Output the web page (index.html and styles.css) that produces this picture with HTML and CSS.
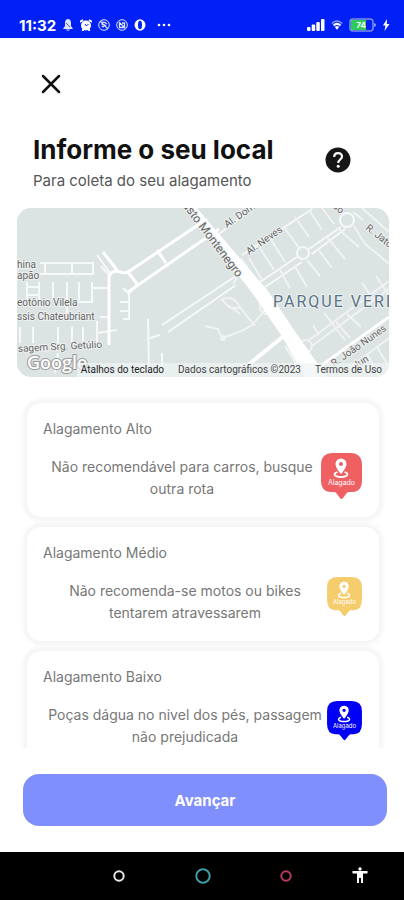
FILE: index.html
```html
<!DOCTYPE html>
<html lang="pt-BR">
<head>
    <meta charset="UTF-8">
    <meta name="viewport" content="width=device-width, initial-scale=1.0">
    <title>Informe o seu local</title>
    <link rel="stylesheet" href="styles.css">
</head>
<body>
    <!-- shared marker shape -->
    <svg class="defs" aria-hidden="true">
        <symbol id="marker" viewBox="0 0 41 47">
            <path fill="currentColor" d="M12 0h17q12 0 12 12v15q0 12-10 12h-3q-2 0-3 2l-3 4q-1.500 2-3 0l-3-4q-1-2-3-2h-3q-10 0-10-12V12Q0 0 12 0z"/>
            <path fill="#fff" fill-rule="evenodd" d="M20 5.500a5.500 5.500 0 0 0-5.500 5.500c0 4 5.500 10 5.500 10s5.500-6 5.500-10A5.500 5.500 0 0 0 20 5.500zm0 3.500a2 2 0 1 1 0 4 2 2 0 0 1 0-4z"/>
            <path fill="none" stroke="#fff" stroke-width="1.800" d="M16.500 19c-5 1.500-3.500 5 3.500 5s8.500-3.500 3.500-5"/>
            <text class="marker-text" x="20.500" y="32" text-anchor="middle" fill="#fff">Alagado</text>
        </symbol>
    </svg>

    <div class="status-bar">
        <span class="time">11:32</span>
        <svg class="status-icon" viewBox="0 0 12 12"><path fill="#dde3ff" d="M6 0c2 0 3 2 3 4v3l2 3H1l2-3V4c0-2 1-4 3-4zM4 10.500h4Q6 13 4 10.500z"/><path stroke="#0020f5" stroke-width=".7" d="M4 4l4 4"/></svg>
        <svg class="status-icon" viewBox="0 0 12 12"><circle cx="6" cy="6.500" r="5" fill="#fff"/><path stroke="#fff" stroke-width="2" d="M0 3l3-2M12 3L9 1M2.500 12l1-2M9.500 12l-1-2"/><path fill="none" stroke="#0020f5" d="M5 5l1.500 2L8.500 5"/></svg>
        <svg class="status-icon" viewBox="0 0 12 12" fill="none" stroke="#dde3ff"><circle cx="6" cy="6" r="5.300"/><path stroke-width="1.300" d="M3 4q3-2 6 1M3.500 6q2-1.500 4.500 1M4 8q1-1 2 0M2 2l8 8"/></svg>
        <svg class="status-icon" viewBox="0 0 12 12" fill="none" stroke="#dde3ff"><circle cx="6" cy="6" r="5.300"/><path stroke-width="1.300" d="M3.500 4v4.500h5V4H6M3 3l6.500 6.500"/></svg>
        <svg class="status-icon" viewBox="0 0 12 12"><ellipse cx="6" cy="6" rx="5.500" ry="5.800" fill="#fff"/><ellipse cx="6" cy="6" rx="2" ry="4.300" fill="#0020f5"/></svg>
        <svg class="dots" viewBox="0 0 16 4" fill="#fff"><circle cx="3" cy="2" r="1.300"/><circle cx="8" cy="2" r="1.300"/><circle cx="13" cy="2" r="1.300"/></svg>
        <svg class="signal" viewBox="0 0 18 12" fill="#fff"><rect y="8" width="3.500" height="4" rx="1"/><rect x="4.700" y="5.500" width="3.500" height="6.500" rx="1"/><rect x="9.300" y="3" width="3.500" height="9" rx="1"/><rect x="14" width="3.500" height="12" rx="1"/></svg>
        <svg class="status-icon" viewBox="0 0 12 12" fill="none"><path stroke="#8c9cff" stroke-width="1.500" d="M.8 4.500Q6-.5 11.200 4.500"/><path stroke="#fff" stroke-width="2" d="M2.500 6.500Q6 3.300 9.500 6.500"/><path fill="#fff" d="M3.800 8q2.200-2 4.400 0L6 10.800z"/></svg>
        <svg class="battery" viewBox="0 0 27 14"><rect x="1" y="1" width="23" height="12" rx="3" fill="none" stroke="#7f8fe8" stroke-width="1.500"/><path fill="#2fc95c" d="M2 2h15v10H2z"/><path fill="#7f8fe8" d="M25 5l2 1v2l-2 1z"/><text class="battery-text" x="12" y="10" text-anchor="middle" fill="#fff">74</text></svg>
        <svg class="bolt" viewBox="0 0 8 12"><path fill="#fff" d="M5 0L1 6.500h2.500L2.500 12 7.500 5H4.800z"/></svg>
    </div>

    <main class="page">
        <button class="close" aria-label="Fechar">
            <svg viewBox="0 0 20 20" width="20" height="20"><path stroke="#111" stroke-width="2.500" stroke-linecap="round" d="M2 2l16 16M18 2L2 18"/></svg>
        </button>

        <header class="header">
            <div>
                <h1>Informe o seu local</h1>
                <p>Para coleta do seu alagamento</p>
            </div>
            <button class="help" aria-label="Ajuda">
                <svg viewBox="0 0 26 26" width="26" height="26"><circle cx="13" cy="13" r="12.500" fill="#161616"/><path fill="none" stroke="#fff" stroke-width="2.200" d="M9.200 10c0-5 7.800-5 7.800-.5 0 3-3.800 3-3.800 6.500"/><circle cx="13.200" cy="19.300" r="1.500" fill="#fff"/></svg>
            </button>
        </header>

        <section class="map" aria-label="Mapa">
            <svg class="map-canvas" viewBox="0 0 372 169" preserveAspectRatio="xMidYMid slice">
                <rect width="372" height="169" fill="#dce3e3"/>
                <!-- side streets -->
                <g fill="none" stroke="#f7f8f8" stroke-width="2">
                    <path d="M23 55h53v11H23M28 55v11M55 55v11M80 47l13 18M84 58l7 8"/>
                    <path d="M10 74v20M22 74v18M36 74v18M50 74v35M62 74v18M75 74v20H60M10 79h12M10 87h12M76 80h16M83 109h9"/>
                    <path d="M3 119v16M16 119v16M41 119v16M55 119v16M66 119v16M80 113v22M80 125l20-3M41 145l-3 20"/>
                    <path d="M112 84v27h-6M103 94h9M103 103h9M106 80l6 6 8-10"/>
                    <path d="M131 111l1 50M133 130l10-3M145 145v18M145 117l77-51M151 124l68-47"/>
                    <path d="M202 26l34-26M225 47l70-46M243 74l37-25M292 41l32-22M248 79l37-25M295 46l33-25"/>
                    <circle cx="286" cy="45" r="6"/>
                    <circle cx="330" cy="12" r="7"/>
                </g>
                <g fill="none" stroke="#f0f3f2" stroke-width="2">
                    <path d="M232 50l13 22M243 40l14 22M253 30l15 24M267 19l15 21M278 9l14 20M292 2l13 20M305 0l12 16"/>
                    <path d="M262 60l11 20M277 57l13 22M290 52l13 16M300 40l15 20M310 29l18 22M320 20l22 19"/>
                    <path d="M337 18c7 10 8 18 20 25l15 13M336 4l10 8M345 0l27 24"/>
                    <path d="M292 132l80-59M295 138l77-57M296 117l6 10M307 105l21 27M319 114l14 16M330 106l14 13M345 75l14 20M359 68l12 18"/>
                    <path d="M332 160l40-30M350 146l12 22M360 139l12 20M268 138l14 22"/>
                    <circle cx="289" cy="138" r="6"/>
                    <path d="M218 62q4 8-2 14M224 50l25 38M248 86q-10 15 0 20l14-1M248 102l-13 15q-10 7-30 13l-4-9-13-3M205 92l8 8h10M204 92q12-6 18 6l16 20M209 96l14 10"/>
                    <circle cx="206" cy="130" r="2"/>
                </g>
                <!-- main streets -->
                <g fill="none" stroke="#fff" stroke-width="3">
                    <path d="M86 44l14 18M92 137V68q4-7 12-4 5 2 10-2l76-51M111 84l91-63M111 64l9 12M140 42l9 13"/>
                    <path d="M305 157l67-48"/>
                    <path stroke-width="4" d="M268 127l-42 34"/>
                </g>
                <path fill="#fff" d="M167-2h11l73 85 24 36 35 50h-22l-24-42-28-41z"/>
                <g class="map-label">
                    <text x="0" y="60">hina</text>
                    <text x="0" y="71">apão</text>
                    <text x="0" y="98">eotônio Vilela</text>
                    <text x="0" y="112">ssis Chateubriant</text>
                    <text transform="translate(1 144) rotate(-3)">sagem Srg. Getúlio</text>
                    <text transform="translate(210 20) rotate(-35)">Al. Dom</text>
                    <text transform="translate(232 47) rotate(-35)">Al. Neves</text>
                    <text transform="translate(315 -1) rotate(40)">ão</text>
                    <text transform="translate(348 21) rotate(38)">R. Jatobá</text>
                    <text transform="translate(317 159) rotate(-35)">R. João Nunes</text>
                    <text transform="translate(338 161) rotate(-30)">Jun</text>
                    <text class="avenue" text-anchor="end" transform="translate(220 70) rotate(53)">Augusto Montenegro</text>
                </g>
                <text class="district" x="256" y="99">PARQUE VERDE</text>
                <text class="google" x="10" y="161">Google</text>
            </svg>
            <div class="map-footer">
                <button>Atalhos do teclado</button>
                <span>Dados cartográficos ©2023</span>
                <a href="#">Termos de Uso</a>
            </div>
        </section>

        <section class="levels">
            <article class="card">
                <h2>Alagamento Alto</h2>
                <div class="card-body">
                    <p>Não recomendável para carros, busque outra rota</p>
                    <svg class="marker marker-high"><use href="#marker"/></svg>
                </div>
            </article>
            <article class="card">
                <h2>Alagamento Médio</h2>
                <div class="card-body">
                    <p>Não recomenda-se motos ou bikes tentarem atravessarem</p>
                    <svg class="marker marker-medium"><use href="#marker"/></svg>
                </div>
            </article>
            <article class="card">
                <h2>Alagamento Baixo</h2>
                <div class="card-body">
                    <p>Poças dágua no nivel dos pés, passagem não prejudicada</p>
                    <svg class="marker marker-low"><use href="#marker"/></svg>
                </div>
            </article>
        </section>

        <button class="next">Avançar</button>
    </main>

    <nav class="nav-bar">
        <button aria-label="Recentes"><svg viewBox="0 0 24 24"><circle cx="12" cy="12" r="4.700" fill="none" stroke="#e8e8e8" stroke-width="2"/></svg></button>
        <button aria-label="Início"><svg viewBox="0 0 24 24"><circle cx="12" cy="12" r="6.700" fill="none" stroke="#3f9ba6" stroke-width="2"/></svg></button>
        <button aria-label="Voltar"><svg viewBox="0 0 24 24"><circle cx="12" cy="12" r="4.700" fill="none" stroke="#b83a5c" stroke-width="2"/></svg></button>
        <button class="access" aria-label="Acessibilidade"><svg viewBox="0 0 24 24" fill="#fff"><circle cx="12" cy="5" r="1.700"/><path d="M4.500 7h15v2.500H15V19h-2v-5h-2v5H9V9.500H4.500z"/></svg></button>
    </nav>
</body>
</html>
```

FILE: styles.css
```css
* {
    box-sizing: border-box;
}
body {
    margin: 0;
    height: 100vh;
    display: flex;
    flex-direction: column;
    background-color: #fff;
    font-family: Inter, "Liberation Sans", sans-serif;
    color: #111;
}
h1, h2, p {
    margin: 0;
}
button {
    border: 0;
    padding: 0;
    background: none;
    font-family: inherit;
}
.defs {
    position: absolute;
    width: 0;
    height: 0;
}

/* Status bar */
.status-bar {
    display: flex;
    align-items: center;
    gap: 6px;
    height: 38px;
    flex-shrink: 0;
    padding: 12px 14px 0 19px;
    background-color: #0020f5;
    color: #fff;
}
.time {
    font-size: 15px;
    font-weight: 700;
}
.status-icon {
    width: 12px;
    height: 12px;
}
.dots {
    width: 16px;
    height: 4px;
    margin-left: 4px;
}
.signal {
    width: 18px;
    height: 12px;
    margin-left: auto;
}
.battery {
    width: 27px;
    height: 14px;
}
.battery-text {
    font-size: 8px;
    font-weight: 700;
}
.bolt {
    width: 8px;
    height: 12px;
}

/* Page */
.page {
    flex: 1;
    min-height: 0;
    display: flex;
    flex-direction: column;
}
.close {
    width: 32px;
    height: 32px;
    flex-shrink: 0;
    margin: 30px 0 0 35px;
    display: flex;
    align-items: center;
    justify-content: center;
}
.header {
    display: flex;
    justify-content: space-between;
    align-items: center;
    padding: 34px 53px 0 33px;
}
.header h1 {
    font-size: 26px;
    line-height: 32px;
    font-weight: 700;
}
.header p {
    font-size: 15px;
    line-height: 30px;
    color: #555;
}
.help {
    width: 26px;
    height: 26px;
    margin-top: -10px;
}
.help svg {
    display: block;
}

/* Map */
.map {
    position: relative;
    height: 169px;
    flex-shrink: 0;
    margin: 12px 15px 0 17px;
    border-radius: 14px;
    overflow: hidden;
}
.map-canvas {
    display: block;
    width: 100%;
    height: 100%;
}
.map-label {
    font-family: Roboto, sans-serif;
    font-size: 10px;
    fill: #666;
    stroke: #eef1f1;
    stroke-width: 2px;
    paint-order: stroke;
}
.avenue {
    font-size: 12px;
}
.district {
    font-family: Roboto, sans-serif;
    font-size: 16px;
    letter-spacing: 2px;
    fill: #587487;
    stroke: #eef1f1;
    stroke-width: 2px;
    paint-order: stroke;
}
.google {
    font-family: "Open Sans", sans-serif;
    font-size: 18px;
    font-weight: 600;
    fill: #fff;
    stroke: #999;
    stroke-width: 2px;
    paint-order: stroke;
}
.map-footer {
    position: absolute;
    right: 0;
    bottom: 0;
    display: flex;
    gap: 14px;
    padding: 0 7px 0 4px;
    background-color: rgba(240, 243, 243, 0.7);
    font-family: Roboto, sans-serif;
    font-size: 10px;
    line-height: 14px;
    color: #444;
    white-space: nowrap;
}
.map-footer button {
    font-size: 10px;
    line-height: 14px;
    color: #222;
}
.map-footer a {
    color: #444;
    text-decoration: none;
}

/* Flood levels */
.levels {
    flex: 1;
    min-height: 0;
    display: flex;
    flex-direction: column;
    gap: 10px;
    margin-top: 18px;
    padding: 8px 25px 8px 27px;
    overflow-y: auto;
    scrollbar-width: none;
}
.card {
    flex-shrink: 0;
    padding: 16px 17px 14px 16px;
    border-radius: 14px;
    background-color: #fff;
    box-shadow: 0 0 4px 4px #f5f5f5;
}
.card h2 {
    font-size: 14px;
    line-height: 20px;
    font-weight: 400;
    color: #777;
}
.card-body {
    display: flex;
    align-items: flex-start;
    min-height: 50px;
    margin-top: 14px;
}
.card-body p {
    flex: 1;
    padding-top: 3px;
    font-size: 14px;
    line-height: 22px;
    text-align: center;
    color: #777;
}
.marker {
    width: 35px;
    height: 40px;
    flex-shrink: 0;
}
.marker-high {
    width: 41px;
    height: 47px;
    color: #ef6063;
}
.marker-medium {
    color: #f5cd6c;
}
.marker-low {
    color: #0000f5;
}
.marker-text {
    font-size: 7px;
}
.next {
    height: 52px;
    flex-shrink: 0;
    margin: 26px 17px 26px 23px;
    border-radius: 16px;
    background-color: #7f8ffc;
    color: #fff;
    font-size: 15px;
    font-weight: 700;
}

/* Navigation bar */
.nav-bar {
    display: flex;
    justify-content: space-between;
    align-items: center;
    height: 48px;
    flex-shrink: 0;
    padding: 0 32px 0 107px;
    background-color: #000;
}
.nav-bar button {
    width: 24px;
    height: 24px;
}
.nav-bar .access {
    margin-left: -10px;
}
.nav-bar svg {
    display: block;
    width: 24px;
    height: 24px;
}
```
